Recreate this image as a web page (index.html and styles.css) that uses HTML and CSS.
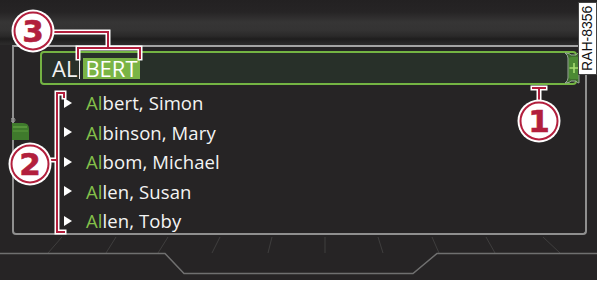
FILE: index.html
```html
<!DOCTYPE html>
<html>
<head>
<meta charset="utf-8">
<link rel="stylesheet" href="styles.css">
</head>
<body>
<div class="screen">
  <div class="top"></div>
  <div class="frame">
    <div class="scrolltab">
      <svg width="20" height="22" viewBox="0 0 20 22">
        <circle cx="2" cy="2" r="2" fill="none" stroke="#9a9a9a" stroke-width="1"/>
        <path d="M1 5 L12 5 Q18 5 18 11 L18 22 L1 22 Z" fill="#3f7a2c"/>
        <path d="M2 9 L16 9" stroke="#6fae4a" stroke-width="1"/>
        <path d="M2 13 L17 13" stroke="#5d9a3c" stroke-width="1"/>
      </svg>
    </div>
    <div class="input">
      <span class="typed">AL</span><span class="caret"></span><span class="sugg">BERT</span>
      <span class="plus">
        <svg width="18" height="32" viewBox="0 0 18 32">
          <path d="M3 1 Q8 1 9 3 L14 3 Q15 1 17 1 L17 31 Q15 31 14 29 L9 29 Q8 31 3 31 Q6 29 6 26 L6 6 Q6 3 3 1 Z" fill="#3e6e2c" stroke="#9aa89a" stroke-width="1"/>
          <path d="M7 7 Q7 5 10 5 L16 5 L16 27 L10 27 Q7 27 7 25 Z" fill="#4c8a34"/>
          <path d="M12 11 V21 M7.5 16 H16.5" stroke="#a6dc72" stroke-width="1.6"/>
        </svg>
      </span>
    </div>
    <ul class="list">
      <li class="row"><span class="tri"></span><span class="name"><b>Al</b>bert, Simon</span></li>
      <li class="row"><span class="tri"></span><span class="name"><b>Al</b>binson, Mary</span></li>
      <li class="row"><span class="tri"></span><span class="name"><b>Al</b>bom, Michael</span></li>
      <li class="row"><span class="tri"></span><span class="name"><b>Al</b>len, Susan</span></li>
      <li class="row"><span class="tri"></span><span class="name"><b>Al</b>len, Toby</span></li>
    </ul>
  </div>
  <div class="floor">
    <svg width="597" height="46" viewBox="0 0 597 46">
      <g stroke="#3f3e3e" stroke-width="1" fill="none">
        <path d="M62 2 L48 18"/>
        <path d="M116 2 L106 18"/>
        <path d="M168 2 L158 18"/>
        <path d="M220 2 L212 18"/>
        <path d="M272 2 L268 18"/>
        <path d="M325 2 L325 18"/>
        <path d="M378 2 L383 18"/>
        <path d="M432 2 L439 18"/>
        <path d="M486 2 L495 18"/>
        <path d="M543 2 L560 18"/>
      </g>
      <path d="M0 18.5 L165 18.5 L184 38.5 L413 38.5 L437 18.5 L597 18.5" stroke="#707070" stroke-width="1.5" fill="none"/>
    </svg>
  </div>
  <div class="label">RAH-8356</div>
  <svg class="callouts" width="597" height="280" viewBox="0 0 597 280">
    <g fill="none" stroke-linecap="square">
      <path d="M52 32 H108 V48 M78 58 V48 H140 V58" stroke="#fff" stroke-width="5"/>
      <path d="M52 32 H108 V48 M78 58 V48 H140 V58" stroke="#b21f3d" stroke-width="2"/>
      <path d="M50 160 H57 M64 97 V93 H57 V232 H64" stroke="#fff" stroke-width="5"/>
      <path d="M50 160 H57 M64 97 V93 H57 V232 H64" stroke="#b21f3d" stroke-width="2"/>
      <path d="M539 101 V88 M533 88 H545" stroke="#fff" stroke-width="5"/>
      <path d="M539 101 V88 M533 88 H545" stroke="#b21f3d" stroke-width="2"/>
    </g>
    <g>
      <circle cx="33" cy="31" r="21.5" fill="#fff"/>
      <circle cx="33" cy="31" r="18.5" fill="#fff" stroke="#b21f3d" stroke-width="2"/>
      <circle cx="30" cy="164" r="21.5" fill="#fff"/>
      <circle cx="30" cy="164" r="18.5" fill="#fff" stroke="#b21f3d" stroke-width="2"/>
      <circle cx="539" cy="121" r="21.5" fill="#fff"/>
      <circle cx="539" cy="121" r="18.5" fill="#fff" stroke="#b21f3d" stroke-width="2"/>
    </g>
    <g class="num">
      <text x="33" y="42" text-anchor="middle">3</text>
      <text x="30" y="175" text-anchor="middle">2</text>
      <text x="539" y="132" text-anchor="middle">1</text>
    </g>
  </svg>
</div>
</body>
</html>
```
FILE: styles.css
```css
html, body {
  margin: 0;
  padding: 0;
  background: #ffffff;
}
.screen {
  position: relative;
  width: 597px;
  height: 280px;
  background: #262425;
  overflow: hidden;
  font-family: "Open Sans", "Noto Sans", sans-serif;
}
.top {
  height: 45px;
  background: linear-gradient(to bottom, #232122 0px, #262425 12px, #363535 22px, #343333 30px, #2a2929 36px, #1f1e1e 39px, #2b2a2a 44px);
}
.frame {
  position: relative;
  margin-left: 12px;
  width: 575px;
  height: 190px;
  box-sizing: border-box;
  border: 2px solid #8f8f8f;
  border-top-color: #a4a4a4;
  border-radius: 0 0 4px 4px;
  padding: 4px 0 0 26px;
}
.scrolltab {
  position: absolute;
  left: -3px;
  top: 71px;
  width: 20px;
  height: 22px;
  line-height: 0;
}
.input {
  position: relative;
  width: 537px;
  height: 34px;
  box-sizing: border-box;
  border: 2px solid #74b443;
  border-radius: 4px;
  background: #283029;
  display: flex;
  align-items: center;
  padding-left: 10px;
  color: #f2f2f2;
  font-size: 22px;
}
.typed {
  line-height: 22px;
}
.caret {
  width: 1px;
  height: 21px;
  background: #e8e8e8;
  margin: 0 3px 0 2px;
}
.sugg {
  background: #7ab445;
  color: #ffffff;
  line-height: 21px;
  height: 21px;
  padding: 0 2px;
}
.plus {
  margin-left: auto;
  margin-right: -5px;
  width: 18px;
  height: 32px;
  line-height: 0;
}
.list {
  list-style: none;
  margin: 3px 0 0 0;
  padding: 0 0 0 24px;
}
.row {
  height: 29.5px;
  display: flex;
  align-items: center;
}
.tri {
  width: 0;
  height: 0;
  border-top: 5px solid transparent;
  border-bottom: 5px solid transparent;
  border-left: 8px solid #ffffff;
  margin-right: 14px;
}
.name {
  color: #f4f4f4;
  font-size: 18.5px;
  letter-spacing: 0.1px;
}
.name b {
  font-weight: normal;
  color: #84c04a;
}
.floor {
  height: 46px;
  line-height: 0;
}
.label {
  position: absolute;
  left: 578px;
  top: 2px;
  width: 19px;
  height: 73px;
  box-sizing: border-box;
  background: #ffffff;
  border: 1px solid #444;
  writing-mode: vertical-rl;
  transform: rotate(180deg);
  font-family: "Liberation Sans", Arial, sans-serif;
  font-size: 14px;
  line-height: 17px;
  text-align: center;
  color: #111;
}
.callouts {
  position: absolute;
  left: 0;
  top: 0;
}
.num text {
  font-family: "DejaVu Sans", sans-serif;
  font-weight: bold;
  font-size: 31px;
  fill: #b21f3d;
  stroke: #b21f3d;
  stroke-width: 0.6px;
}
```
